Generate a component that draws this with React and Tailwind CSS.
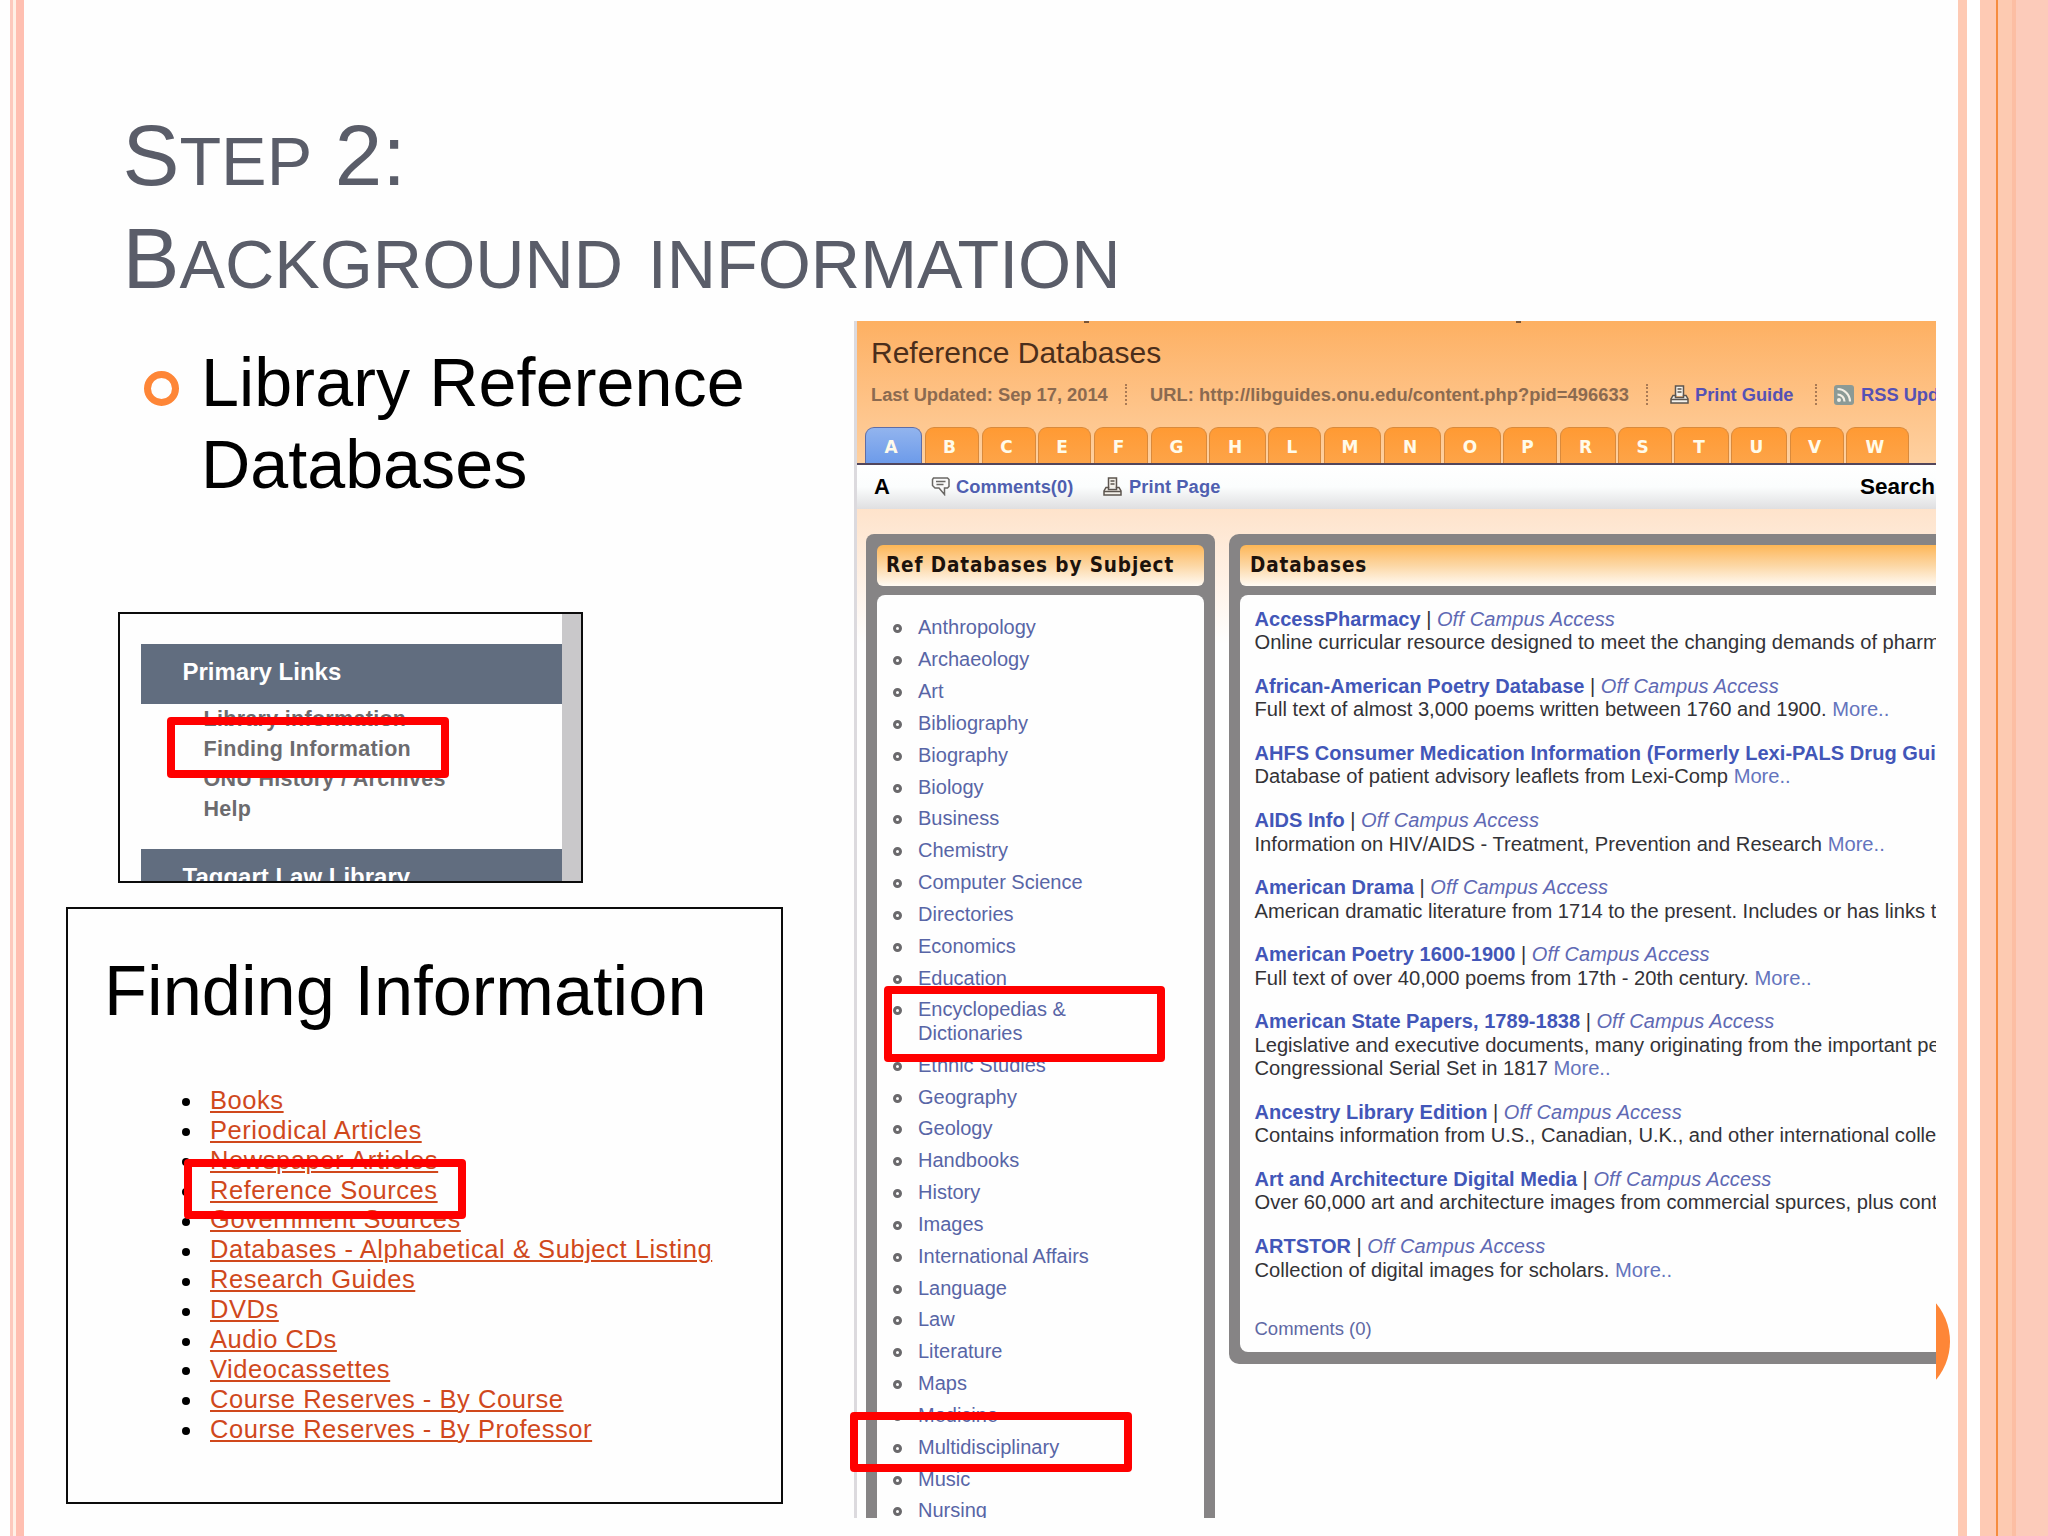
import React from "react";

const tabs = [
  { letter: "A", width: "w-[57px]", gap: "mr-[3px]", active: true },
  { letter: "B", width: "w-[54px]", gap: "mr-[3px]" },
  { letter: "C", width: "w-[54px]", gap: "mr-[2px]" },
  { letter: "E", width: "w-[53px]", gap: "mr-[3px]" },
  { letter: "F", width: "w-[54px]", gap: "mr-[3px]" },
  { letter: "G", width: "w-[56px]", gap: "mr-[2px]" },
  { letter: "H", width: "w-[57px]", gap: "mr-[2px]" },
  { letter: "L", width: "w-[53px]", gap: "mr-[3px]" },
  { letter: "M", width: "w-[57px]", gap: "mr-[3px]" },
  { letter: "N", width: "w-[57px]", gap: "mr-[3px]" },
  { letter: "O", width: "w-[57px]", gap: "mr-[2px]" },
  { letter: "P", width: "w-[54px]", gap: "mr-[3px]" },
  { letter: "R", width: "w-[56px]", gap: "mr-[2px]" },
  { letter: "S", width: "w-[54px]", gap: "mr-[2px]" },
  { letter: "T", width: "w-[55px]", gap: "mr-[2px]" },
  { letter: "U", width: "w-[56px]", gap: "mr-[3px]" },
  { letter: "V", width: "w-[54px]", gap: "mr-[2px]" },
  { letter: "W", width: "w-[63px]", gap: "" },
];

const subjects = [
  "Anthropology",
  "Archaeology",
  "Art",
  "Bibliography",
  "Biography",
  "Biology",
  "Business",
  "Chemistry",
  "Computer Science",
  "Directories",
  "Economics",
  "Education",
  "Encyclopedias & Dictionaries",
  "Ethnic Studies",
  "Geography",
  "Geology",
  "Handbooks",
  "History",
  "Images",
  "International Affairs",
  "Language",
  "Law",
  "Literature",
  "Maps",
  "Medicine",
  "Multidisciplinary",
  "Music",
  "Nursing",
];

const databases = [
  {
    name: "AccessPharmacy",
    lines: ["Online curricular resource designed to meet the changing demands of pharm"],
  },
  {
    name: "African-American Poetry Database",
    lines: ["Full text of almost 3,000 poems written between 1760 and 1900."],
    more: true,
  },
  {
    name: "AHFS Consumer Medication Information (Formerly Lexi-PALS Drug Gui",
    spacing: "tracking-[0.060px]",
    lines: ["Database of patient advisory leaflets from Lexi-Comp"],
    more: true,
  },
  {
    name: "AIDS Info",
    lines: ["Information on HIV/AIDS - Treatment, Prevention and Research"],
    more: true,
  },
  {
    name: "American Drama",
    lines: ["American dramatic literature from 1714 to the present. Includes or has links t"],
  },
  {
    name: "American Poetry 1600-1900",
    lines: ["Full text of over 40,000 poems from 17th - 20th century."],
    more: true,
  },
  {
    name: "American State Papers, 1789-1838",
    lines: [
      "Legislative and executive documents, many originating from the important pe",
      "Congressional Serial Set in 1817",
    ],
    more: true,
  },
  {
    name: "Ancestry Library Edition",
    lines: ["Contains information from U.S., Canadian, U.K., and other international colle"],
  },
  {
    name: "Art and Architecture Digital Media",
    lines: ["Over 60,000 art and architecture images from commercial spurces, plus cont"],
  },
  {
    name: "ARTSTOR",
    lines: ["Collection of digital images for scholars."],
    more: true,
  },
];

const findingLinks = [
  "Books",
  "Periodical Articles",
  "Newspaper Articles",
  "Reference Sources",
  "Government Sources",
  "Databases - Alphabetical & Subject Listing",
  "Research Guides",
  "DVDs",
  "Audio CDs",
  "Videocassettes",
  "Course Reserves - By Course",
  "Course Reserves - By Professor",
];

const PrinterIcon = ({ className }) => (
  <svg viewBox="0 0 19 19" className={className} fill="#f4f1ea" stroke="#5c554f" strokeWidth="1.5">
    <path d="M5.5 11V1h8v10" />
    <path d="M7.5 4h4M7.5 7h4" />
    <path d="M3 10.5h2.5v2h8v-2H16l2 3.5v4H1v-4z" />
    <path d="M1 14.5h17" />
  </svg>
);

const CommentIcon = ({ className }) => (
  <svg viewBox="0 0 19 19" className={className} fill="#fafafa" stroke="#6a6865" strokeWidth="1.5">
    <path d="M2.5 1h14l1.5 1.500v7l-1.500 1.500h-3v6.500L8 11H4L1.500 8.500v-6z" />
    <path d="M5 4.500h9.500M5.500 7.500h7" />
  </svg>
);

const RssIcon = ({ className }) => (
  <svg viewBox="0 0 20 20" className={className}>
    <rect width="20" height="20" rx="3" fill="#8b9a96" />
    <g fill="none" stroke="#f3efe6" strokeWidth="2.200">
      <path d="M3.500 9.500a7 7 0 0 1 7 7" />
      <path d="M3.500 4a12.500 12.500 0 0 1 12.500 12.500" />
    </g>
    <circle cx="5" cy="15" r="2" fill="#f3efe6" />
  </svg>
);

const Divider = ({ className }) => (
  <div className={"h-[21px] w-0 shrink-0 border-l-2 border-dotted border-[#a97a55] " + className} />
);

const Highlight = ({ className }) => (
  <div className={"absolute z-10 rounded-[4px] border-8 border-[#ff0000] " + className} />
);

function PrimaryLinks() {
  return (
    <div className="relative ml-[93.5px] mt-[106.500px] h-[271px] w-[465px]">
      <div className="flex h-full w-full overflow-hidden border-2 border-[#0c0c0c] bg-[#fefefe]">
        <div className="flex w-[442px] shrink-0 flex-col pl-[21px] pt-[30px] font-bold">
          <div className="h-[60px] shrink-0 bg-[#616d7f] pl-[42px] pt-[13px] text-[24px] leading-[30px] text-white">
            Primary Links
          </div>
          <div className="mb-[25px] pl-[63px] text-[21.500px] leading-[30px] tracking-[0.300px] text-[#6c6b6e]">
            <div>Library information</div>
            <div>Finding Information</div>
            <div>ONU History / Archives</div>
            <div>Help</div>
          </div>
          <div className="h-[60px] shrink-0 bg-[#616d7f] pl-[42px] pt-[13px] text-[24px] leading-[30px] text-white">
            Taggart Law Library
          </div>
        </div>
        <div className="grow bg-[#c9c8ca]" />
      </div>
      <Highlight className="left-[49px] top-[105px] h-[61px] w-[282px]" />
    </div>
  );
}

function FindingInformation() {
  return (
    <div className="relative ml-[42px] mt-[24px] h-[597px] w-[717px] border-2 border-[#0c0c0c] bg-[#fefefe] pl-[36px] pt-[42px]">
      <div className="text-[70.400px] leading-[80px] text-black">Finding Information</div>
      <ul className="mt-[55px] pl-[78px] text-[25.500px] leading-[29.900px] tracking-[0.550px]">
        {findingLinks.map((link) => (
          <li key={link} className="flex items-center">
            <span className="mr-[20px] mt-[3px] size-[8px] rounded-full bg-black" />
            <span className="text-[#d0481c] underline decoration-2 underline-offset-2">{link}</span>
          </li>
        ))}
      </ul>
      <Highlight className="left-[116px] top-[250px] h-[60px] w-[282px]" />
    </div>
  );
}

function GuideHeader() {
  return (
    <div className="relative h-[144px] border-b-2 border-[#51465c] bg-gradient-to-b from-[#fdb062] to-[#fed0a0] pl-[8px] pt-[14px]">
      {/* descenders of the cropped line above */}
      <div className="absolute left-[227px] top-0 h-[2px] w-[5px] bg-[#7a5434]" />
      <div className="absolute left-[659px] top-0 h-[2px] w-[5px] bg-[#7a5434]" />
      <div className="pl-[6px] text-[30px] leading-[36px] text-[#4b2e1b]">Reference Databases</div>
      <div className="mt-[12px] flex h-[24px] items-center whitespace-nowrap pl-[6px] text-[18.300px] font-bold leading-[24px] text-[#8b6a50]">
        <div className="w-[254px] shrink-0">Last Updated: Sep 17, 2014</div>
        <Divider className="mr-[23px]" />
        <div className="w-[496px] shrink-0 tracking-[0.060px]">
          URL: http://libguides.onu.edu/content.php?pid=496633
        </div>
        <Divider className="mr-[22px]" />
        <PrinterIcon className="mr-[6px] size-[19px] shrink-0" />
        <div className="w-[120px] shrink-0 text-[#5551b4]">Print Guide</div>
        <Divider className="mr-[17px]" />
        <RssIcon className="mr-[7px] size-[20px] shrink-0" />
        <div className="text-[#5551b4]">RSS Upd</div>
      </div>
      <div className="mt-[20px] flex h-[36px] font-['DejaVu_Sans'] text-[17px] font-bold leading-[39px] text-[#fffbea]">
        {tabs.map((tab) => (
          <div
            key={tab.letter}
            className={
              "h-full shrink-0 rounded-t-[9px] border border-b-0 pr-[5px] text-center " +
              (tab.active
                ? "border-[#5f6da6] bg-gradient-to-b from-[#92b4ee] to-[#6d9bea] "
                : "border-[#d98a3c] bg-gradient-to-b from-[#ff9a33] to-[#fda448] ") +
              tab.width +
              " " +
              tab.gap
            }
          >
            {tab.letter}
          </div>
        ))}
      </div>
    </div>
  );
}

function PanelTitle({ children, className }) {
  return (
    <div
      className={
        "h-[41px] shrink-0 bg-gradient-to-b from-[#fdb654] via-[#fcd7a4] to-[#fffaf3] font-['DejaVu_Sans_Condensed','DejaVu_Sans'] text-[20.500px] font-bold leading-[41px] tracking-[0.900px] text-[#1c120c] " +
        className
      }
    >
      {children}
    </div>
  );
}

function Guide() {
  return (
    <div className="relative z-10 h-[1197px] w-[1082px] shrink-0">
      <div className="h-full overflow-hidden border-l-[3px] border-[#dcdade] bg-[#fefefe]">
        <GuideHeader />
        <div className="flex h-[44px] items-center bg-gradient-to-b from-white via-[#fbfdfd] to-[#dfdfe1] pl-[17px] text-[18.300px] font-bold text-[#4f5fb0]">
          <div className="w-[57px] text-[22px] text-black">A</div>
          <CommentIcon className="mr-[6px] size-[19px]" />
          <div className="w-[147px] tracking-[0.050px]">Comments(0)</div>
          <PrinterIcon className="mr-[7px] size-[19px]" />
          <div className="tracking-[0.100px]">Print Page</div>
          <div className="ml-auto mr-px text-[22.500px] text-black">Search</div>
        </div>
        <div className="flex h-[1009px] items-start overflow-hidden bg-gradient-to-b from-[#fee3cb] to-[#fefefe] to-[135px] pl-[9px] pt-[25px]">
          <div className="flex w-[349px] shrink-0 flex-col rounded-t-[8px] bg-[#868485] px-[11px] pt-[11px]">
            <PanelTitle className="rounded-[6px] pl-[9px]">Ref Databases by Subject</PanelTitle>
            <ul className="mt-[9px] flex h-[960px] flex-col gap-[8.450px] rounded-t-[8px] bg-[#fefefe] pl-[16px] pt-[21.500px] text-[20px] leading-[23.400px] text-[#5865a6]">
              {subjects.map((subject) => (
                <li key={subject} className="flex items-start">
                  <span className="mr-[16px] mt-[8px] size-[9px] shrink-0 rounded-full border-[3px] border-[#6a696c]" />
                  <span className="w-[190px]">{subject}</span>
                </li>
              ))}
            </ul>
          </div>
          <div className="ml-[14px] flex h-[830px] w-[900px] shrink-0 flex-col rounded-l-[10px] bg-[#868485] pb-[12px] pl-[11px] pt-[11px]">
            <PanelTitle className="rounded-l-[6px] pl-[10px]">Databases</PanelTitle>
            <div className="mt-[9px] flex grow flex-col gap-[20.300px] rounded-l-[8px] bg-[#fefefe] pl-[14.500px] pt-[13px] text-[20.150px] leading-[23.400px] text-[#333236]">
              {databases.map((db) => (
                <div key={db.name} className="whitespace-nowrap">
                  <div className="text-[20px]">
                    <span className={"font-bold text-[#4256b8] " + (db.spacing || "tracking-[0.030px]")}>
                      {db.name}
                    </span>
                    {" | "}
                    <span className="italic tracking-[0.120px] text-[#5f69b4]">Off Campus Access</span>
                  </div>
                  {db.lines.map((line, i) => (
                    <div key={line}>
                      {line}
                      {db.more && i === db.lines.length - 1 && (
                        <span className="text-[#6474bd]"> More..</span>
                      )}
                    </div>
                  ))}
                </div>
              ))}
              <div className="mt-[15px] text-[18.500px] text-[#6068a4]">Comments (0)</div>
            </div>
          </div>
        </div>
      </div>
      <Highlight className="left-[30px] top-[665px] h-[76px] w-[281px]" />
      <Highlight className="-left-[4px] top-[1091px] h-[60px] w-[282px]" />
    </div>
  );
}

export default function App() {
  return (
    <div className="flex h-[1536px] w-[2048px] overflow-hidden bg-[#fefefe] font-['Liberation_Sans',sans-serif]">
      <div className="flex shrink-0 pl-[10px]">
        <div className="w-[3px] bg-[#fdc9bd]" />
        <div className="w-[3px] bg-[#fff0e6]" />
        <div className="w-[8px] bg-[#ffbfb1]" />
      </div>

      <div className="flex w-[1934px] shrink-0 flex-col">
        <div className="pl-[98.500px] pt-[105.400px] text-[85.330px] leading-[102.700px] text-[#5a5d69]">
          <div>
            S<span className="text-[68.270px] leading-none">TEP</span>
            <span className="-ml-px"> 2:</span>
          </div>
          <div>
            B<span className="text-[68.270px] leading-none">ACKGROUND</span>{" "}
            <span className="ml-px text-[68.270px] leading-none">INFORMATION</span>
          </div>
        </div>
        <div className="mt-[10px] flex">
          <div className="w-[830px] shrink-0">
            <div className="flex pl-[120px] pt-[20.500px]">
              <div className="mt-[30px] size-[35px] rounded-full border-[7px] border-[#fe8637]" />
              <div className="ml-[22px] text-[68.270px] leading-[82px] text-black">
                <div className="tracking-[0.080px]">Library Reference</div>
                <div>Databases</div>
              </div>
            </div>
            <PrimaryLinks />
            <FindingInformation />
          </div>
          <div className="relative">
            <div className="absolute left-[977px] top-[961px] size-[119px] rounded-full bg-[#fe8637]" />
            <Guide />
          </div>
        </div>
      </div>

      <div className="flex grow">
        <div className="w-[9px] bg-[#fecab4]" />
        <div className="w-[13px] bg-white" />
        <div className="w-[16px] bg-[#fecab4]" />
        <div className="w-[2px] bg-[#f68c3f]" />
        <div className="w-[14px] bg-[#fdcab1]" />
        <div className="w-[4px] bg-[#fcbea3]" />
        <div className="grow bg-[#fccbba]" />
      </div>
    </div>
  );
}
